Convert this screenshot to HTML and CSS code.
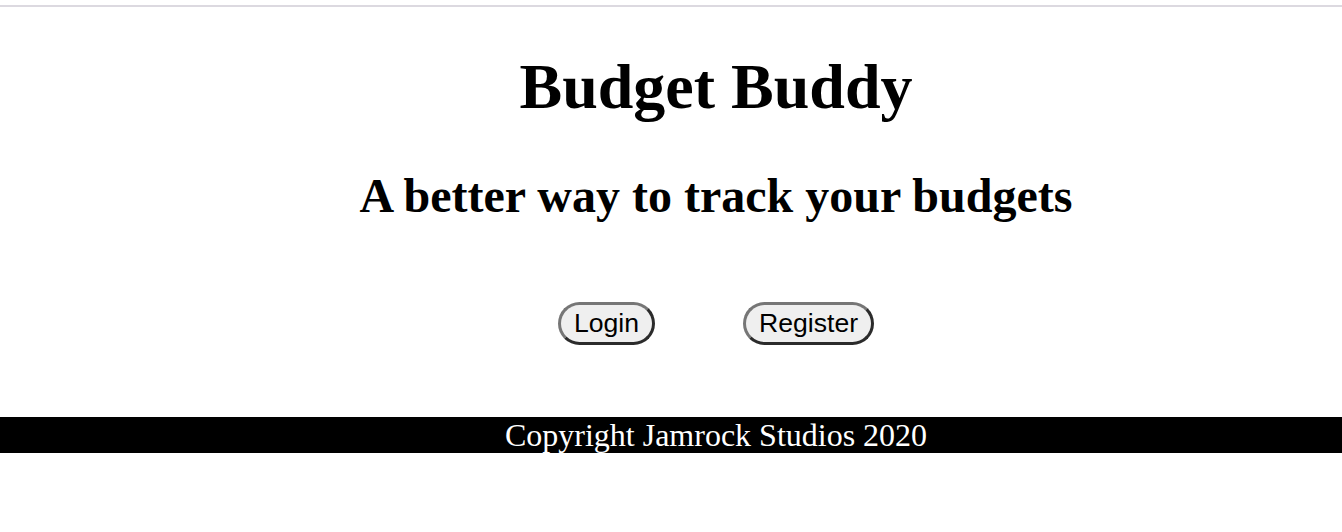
FILE: index.html
```html
<!DOCTYPE html>
<html>
<head>
<meta charset="utf-8">
<title>Budget Buddy</title>
<link rel="stylesheet" href="styles.css">
</head>
<body>
<div class="topline"></div>
<main class="hero">
  <h1 class="title">Budget Buddy</h1>
  <h2 class="subtitle">A better way to track your budgets</h2>
  <div class="actions">
    <button class="btn">Login</button>
    <button class="btn">Register</button>
  </div>
</main>
<footer class="footer">
  <p class="footer-text">Copyright Jamrock Studios 2020</p>
</footer>
</body>
</html>
```
FILE: styles.css
```css
html, body {
  margin: 0;
  padding: 0;
  background: #ffffff;
}
body {
  font-family: "Liberation Serif", "Times New Roman", serif;
  color: #000;
}
.topline {
  margin-top: 5px;
  height: 2px;
  background: #dcd9e0;
}
.hero {
  padding-left: 90px;
  text-align: center;
}
.title {
  margin: 0;
  padding-top: 43px;
  font-size: 64px;
  line-height: 74px;
  font-weight: bold;
}
.subtitle {
  margin: 0;
  padding-top: 44px;
  font-size: 48px;
  line-height: 56px;
  font-weight: bold;
}
.actions {
  display: flex;
  justify-content: center;
  gap: 88px;
  padding-top: 78px;
  padding-bottom: 72px;
}
.btn {
  font-family: "Liberation Sans", Arial, sans-serif;
  font-size: 26.6px;
  line-height: 37px;
  padding: 0 13px;
  background: #efefef;
  color: #000;
  border: 3px solid;
  border-color: #767676 #2b2b2b #2b2b2b #767676;
  border-radius: 22px;
}
.footer {
  background: #000;
  padding-left: 90px;
  text-align: center;
}
.footer-text {
  margin: 0;
  color: #fff;
  font-size: 32px;
  line-height: 36px;
}
```
